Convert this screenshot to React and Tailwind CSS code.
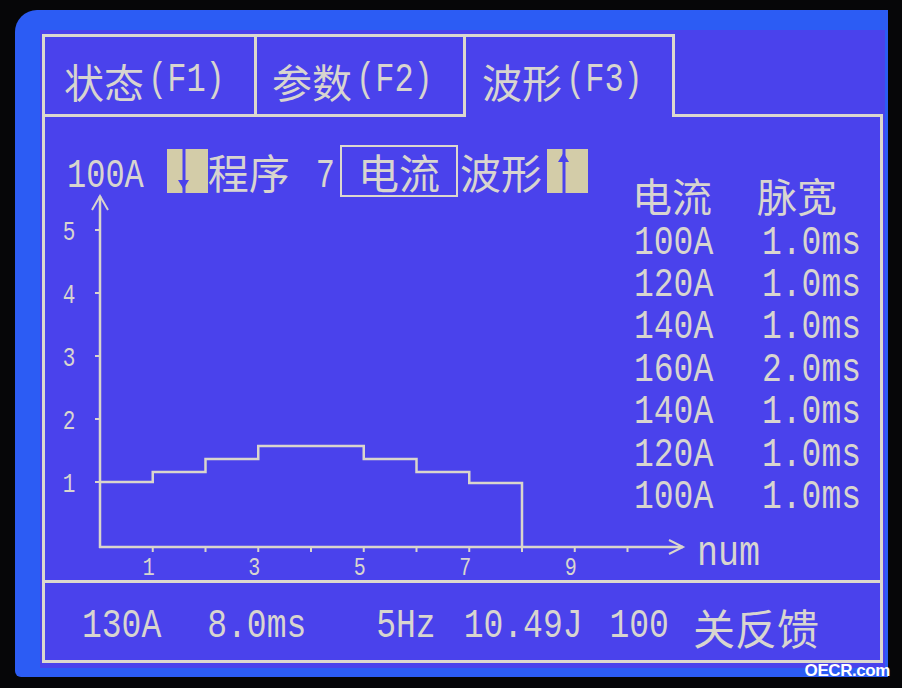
import React from 'react'

// LCD style text helpers: narrow mono for ascii, CJK font for hanzi
function M({ children, className = '' }) {
  return (
    <span className={`inline-block leading-none whitespace-pre scale-y-125 font-['Liberation_Mono',monospace] ${className}`}>
      {children}
    </span>
  )
}

function C({ children, className = '' }) {
  return (
    <span className={`inline-block leading-none font-['Noto_Sans_CJK_SC',sans-serif] ${className}`}>
      {children}
    </span>
  )
}

function ArrowBlock({ up }) {
  return (
    <svg width="41" height="44" viewBox="0 0 41 44" className="block">
      <rect x="0" y="0" width="41" height="44" fill="#d3cca8" />
      <rect x="15.5" y="0" width="3" height="44" fill="#4a42ec" />
      {up ? (
        <polygon points="11,13 22,13 16.5,4" fill="#4a42ec" />
      ) : (
        <polygon points="11,31 22,31 16.5,40" fill="#4a42ec" />
      )}
    </svg>
  )
}

const rows = [
  ['100A', '1.0ms'],
  ['120A', '1.0ms'],
  ['140A', '1.0ms'],
  ['160A', '2.0ms'],
  ['140A', '1.0ms'],
  ['120A', '1.0ms'],
  ['100A', '1.0ms'],
]

function Chart() {
  const x = (n) => 55 + n * 52.75
  const ln = '#d9d5cc'
  const d = `M55 365 H${x(1)} V355 H${x(2)} V342 H${x(3)} V329 H${x(5)} V342 H${x(6)} V355 H${x(7)} V366 H${x(8)} V430`
  const yl = [
    [5, 113],
    [4, 176],
    [3, 239],
    [2, 302],
    [1, 365],
  ]
  const xl = [1, 3, 5, 7, 9]
  return (
    <svg width="835" height="463" viewBox="0 0 835 463" className="col-start-1 row-start-1 block overflow-visible">
      <g stroke={ln} strokeWidth="2.5" fill="none">
        <line x1="55" y1="79" x2="55" y2="431" />
        <line x1="54" y1="430" x2="638" y2="430" />
        <polyline points="47,93 55,79 63,93" strokeWidth="2" />
        <polyline points="624,423 638,430 624,437" strokeWidth="2" />
        {yl.map(([v, y]) => (
          <line key={v} x1="50" y1={y} x2="55" y2={y} strokeWidth="2" />
        ))}
        {[1, 2, 3, 4, 5, 6, 7, 8, 9, 10].map((n) => (
          <line key={n} x1={x(n)} y1="430" x2={x(n)} y2="435" strokeWidth="2" />
        ))}
        <path d={d} />
      </g>
      <g fill="#d8d5cf" fontFamily="'Liberation Mono', monospace" textAnchor="middle">
        {yl.map(([v, y]) => (
          <text key={v} fontSize="21" transform={`translate(24 ${y + 9.5}) scale(1 1.3)`}>
            {v}
          </text>
        ))}
        {xl.map((n) => (
          <text key={n} fontSize="20" transform={`translate(${x(n) - 4} 458) scale(1 1.3)`}>
            {n}
          </text>
        ))}
        <text fontSize="35" textAnchor="start" transform="translate(652 448) scale(1 1.2)">
          num
        </text>
      </g>
    </svg>
  )
}

export default function App() {
  return (
    <div className="relative w-[902px] h-[688px] bg-[#060608] pt-[10px] pl-[15px] overflow-hidden text-[#d8d5cf]">
      <div className="w-[873px] h-[667px] bg-[#2c5cf4] rounded-tl-[22px] rounded-bl-[6px] pt-[20px] pl-[25px]">
        <div className="w-[845px] h-[638px] bg-[#4a42ec] pl-[2px] pt-[4px]">
          {/* tabs */}
          <div className="flex h-[83px]">
            <div className="w-[215px] border-[3px] border-[#dcd8ce] flex items-center pl-[19px] pt-[10px]">
              <C className="text-[40px]">状态</C>
              <M className="text-[32px] ml-[4px]">(F1)</M>
            </div>
            <div className="w-[209px] border-y-[3px] border-r-[3px] border-[#dcd8ce] flex items-center pl-[15px] pt-[10px]">
              <C className="text-[40px]">参数</C>
              <M className="text-[32px] ml-[4px]">(F2)</M>
            </div>
            <div className="w-[209px] border-t-[3px] border-r-[3px] border-[#dcd8ce] flex items-center pl-[16px] pt-[8px]">
              <C className="text-[40px]">波形</C>
              <M className="text-[32px] ml-[4px]">(F3)</M>
            </div>
            <div className="w-[208px] border-b-[3px] border-[#dcd8ce]" />
          </div>

          {/* main panel */}
          <div className="w-[841px] h-[546px] border-x-[3px] border-b-[3px] border-[#dcd8ce] flex flex-col">
            <div className="grid h-[463px]">
              <Chart />
              <div className="col-start-1 row-start-1 flex">
                <div className="w-[587px] pt-[28px]">
                  <div className="flex items-center h-[52px] pl-[22px]">
                    <M className="text-[32px] translate-y-[6px]">100A</M>
                    <div className="ml-[23px]">
                      <ArrowBlock />
                    </div>
                    <C className="text-[41px]">程序</C>
                    <M className="text-[32px] ml-[26px] translate-y-[6px]">7</M>
                    <div className="ml-[5px] w-[118px] h-[52px] border-2 border-[#dcd8ce] flex items-center justify-center">
                      <C className="text-[41px]">电流</C>
                    </div>
                    <C className="text-[41px] ml-[2px]">波形</C>
                    <div className="ml-[5px]">
                      <ArrowBlock up />
                    </div>
                  </div>
                </div>
                <div className="pt-[57px] flex flex-col">
                  <div className="flex items-center h-[42px] mb-[6px]">
                    <C className="text-[40px] w-[125px]">电流</C>
                    <C className="text-[40px]">脉宽</C>
                  </div>
                  {rows.map(([a, w], i) => (
                    <div key={i} className="flex items-center h-[42.4px] pl-[2px]">
                      <M className="text-[33px] w-[128px]">{a}</M>
                      <M className="text-[33px]">{w}</M>
                    </div>
                  ))}
                </div>
              </div>
            </div>

            {/* status bar */}
            <div className="flex-1 border-t-[3px] border-[#dcd8ce] flex items-center pl-[37px] pt-[10px]">
              <M className="text-[33px]">130A</M>
              <M className="text-[33px] ml-[46px]">8.0ms</M>
              <M className="text-[33px] ml-[70px]">5Hz</M>
              <M className="text-[33px] ml-[28px]">10.49J</M>
              <M className="text-[33px] ml-[27px]">100</M>
              <C className="text-[42px] ml-[24px]">关反馈</C>
            </div>
          </div>
        </div>
      </div>
      <div className="absolute right-[12px] bottom-[5px] text-white font-bold text-[17px] tracking-tight font-['Liberation_Sans',sans-serif]">
        OECR.com
      </div>
    </div>
  )
}
